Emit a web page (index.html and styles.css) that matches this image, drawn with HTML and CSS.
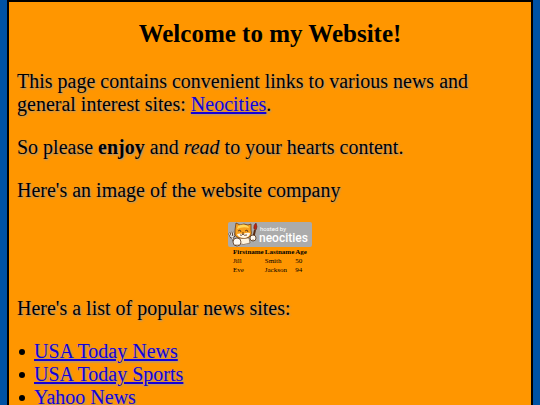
FILE: index.html
```html
<!DOCTYPE html>
<html lang="en">
<head>
    <meta charset="UTF-8">
    <meta name="viewport" content="width=device-width, initial-scale=1.0">
    <title>Welcome to my Website!</title>
    <link rel="stylesheet" href="styles.css">
</head>
<body>
    <div class="page">
        <h1>Welcome to my Website!</h1>

        <p>This page contains convenient links to various news and general interest sites: <a href="https://neocities.org">Neocities</a>.</p>

        <p>So please <strong>enjoy</strong> and <em>read</em> to your hearts content.</p>

        <p>Here's an image of the website company</p>

        <a class="badge" href="https://neocities.org" aria-label="Hosted by Neocities">
            <svg width="84" height="25" viewBox="0 0 84 25">
                <rect x="0" y="0" width="84" height="25" rx="2" fill="#ababab"/>
                <!-- fork -->
                <path d="M1 11l2 4 3-1-1-4M3 10l1 5 3 7" fill="none" stroke="#4d3b30" stroke-width="2"/>
                <path d="M1 11l2 4 3-1-1-4M3 10l1 5 3 7" fill="none" stroke="#eee" stroke-width="1"/>
                <!-- brush -->
                <path d="M27 8l-2 9" stroke="#5a2b12" stroke-width="2"/>
                <path d="M26 7q-1-4 2-6q2 4 0 7z" fill="#b92316" stroke="#5a2b12" stroke-width="0.5"/>
                <!-- cat -->
                <path d="M11 16l-1 5q5 3 12 0l-1-5z" fill="#fff4dd" stroke="#4d2b12" stroke-width="0.5"/>
                <path d="M7 8L8 1l4 2q4-2 8 0l3-1v6q2 7-5 8-9 1-11-3z" fill="#f7a01d" stroke="#6b3b12" stroke-width="0.8"/>
                <path d="M10 4q5-3 10 0l1 2q-6-2-12 1z" fill="#ffd75a"/>
                <path d="M9 12q3-1 6 0 4-2 7-1 0 4-5 5-7 0-8-4z" fill="#fff7e8"/>
                <path d="M10 9l2-1 1 2M17 9l2-1 1 2M14 11h2M12 13q2 1 3-1 1 2 4 1" fill="none" stroke="#4d2b12" stroke-width="0.8"/>
                <circle cx="9" cy="20" r="4" fill="#fffaf0" stroke="#4d2b12" stroke-width="0.8"/>
                <circle cx="25" cy="16" r="3" fill="#fffaf0" stroke="#4d2b12" stroke-width="0.8"/>
                <path d="M8 22v2M10 22v1M25 17v2" stroke="#4d2b12" stroke-width="0.5"/>
                <text class="badge-small" x="32" y="9">hosted by</text>
                <text class="badge-name" x="31" y="20">neocities</text>
            </svg>
        </a>

        <table>
            <tr>
                <th>Firstname</th>
                <th>Lastname</th>
                <th>Age</th>
            </tr>
            <tr>
                <td>Jill</td>
                <td>Smith</td>
                <td>50</td>
            </tr>
            <tr>
                <td>Eve</td>
                <td>Jackson</td>
                <td>94</td>
            </tr>
        </table>

        <p>Here's a list of popular news sites:</p>

        <ul>
            <li><a href="https://www.usatoday.com/news/">USA Today News</a></li>
            <li><a href="https://www.usatoday.com/sports/">USA Today Sports</a></li>
            <li><a href="https://news.yahoo.com">Yahoo News</a></li>
        </ul>
    </div>
</body>
</html>
```
FILE: styles.css
```css
html {
    background-color: #0052a3;
}
body {
    margin: 0 7px;
    font-family: "Liberation Serif", "Times New Roman", serif;
    font-size: 20px;
    line-height: 23px;
    color: black;
}
.page {
    min-height: 100vh;
    box-sizing: border-box;
    padding: 1px 8px;
    border: 2px solid black;
    background-color: #ff9600;
}
h1 {
    margin: 16px 0 22px;
    font-size: 25px;
    line-height: 29px;
    text-align: center;
}
p {
    margin: 20px 0;
    text-shadow: 1px 1px 2px #999;
}
a {
    color: #1400d8;
}
.badge {
    display: block;
    width: 84px;
    margin: 0 auto;
}
.badge svg {
    display: block;
}
.badge text {
    fill: white;
    font-family: Roboto, sans-serif;
}
.badge-small {
    font-size: 6px;
}
.badge-name {
    font-size: 12px;
    font-weight: 500;
}
table {
    margin: 0 auto 22px;
    border-spacing: 1px;
    font-size: 7px;
    line-height: 8px;
}
th, td {
    padding: 0;
    text-align: left;
}
ul {
    margin: 20px 0;
    padding-left: 2px;
    list-style: none;
}
li {
    display: flex;
    align-items: center;
    gap: 9px;
}
li::before {
    content: "";
    width: 6px;
    height: 6px;
    border-radius: 50%;
    background-color: black;
}
li a {
    text-shadow: 1px 1px 2px #999;
}
```
